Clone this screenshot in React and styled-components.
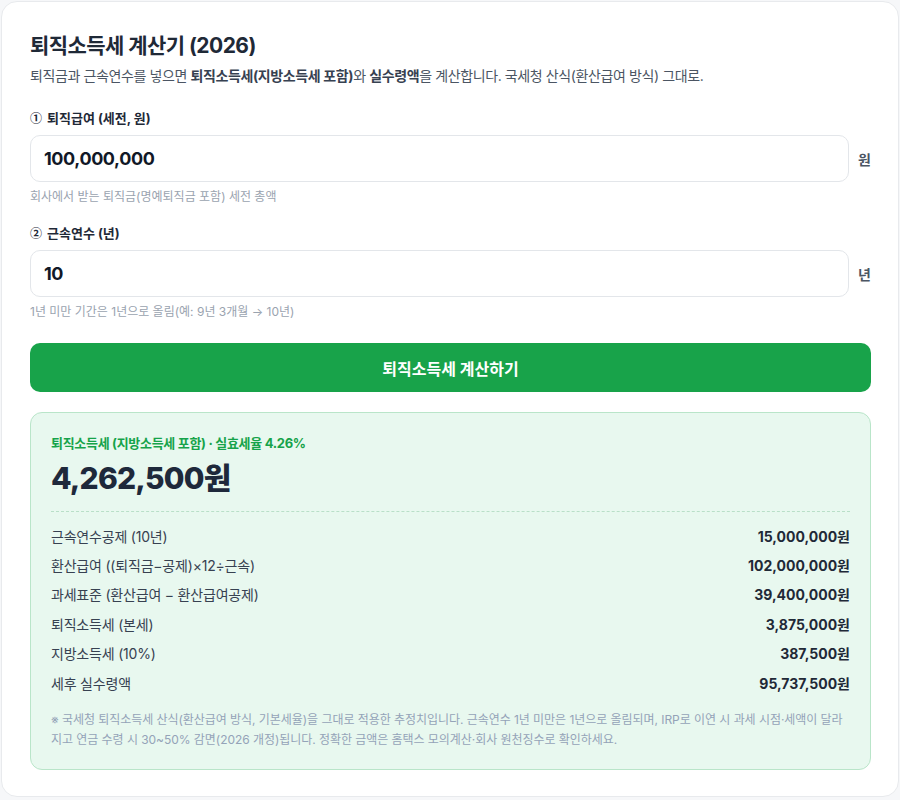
import React from "react";
import styled, { createGlobalStyle } from "styled-components";

const Global = createGlobalStyle`
  * { box-sizing: border-box; }
  html, body { margin: 0; padding: 0; background: #f6f7f9; }
  body { font-family: Inter, "Noto Sans CJK KR", sans-serif; color: #1f2937; }
`;

const Page = styled.div`
  padding: 1px 1px 3px 1px;
`;

const Card = styled.div`
  background: #fff;
  border: 1px solid #e8eaed;
  border-radius: 16px;
  padding: 29px 27px 27px 28px;
  height: 796px;
`;

const Title = styled.h1`
  margin: 0;
  font-size: 21px;
  font-weight: 700;
  color: #1f2937;
  line-height: 30px;
  letter-spacing: -0.55px;
`;

const Subtitle = styled.p`
  margin: 4px 0 0;
  font-size: 14px;
  line-height: 22px;
  color: #4b5563;
  letter-spacing: -0.39px;
  b { font-weight: 700; color: #374151; }
`;

const Field = styled.div`
  margin-top: ${(p) => p.$top}px;
`;

const Label = styled.div`
  display: flex;
  align-items: center;
  font-size: 13px;
  font-weight: 700;
  color: #1f2937;
  line-height: 18px;
  margin-bottom: 8px;
`;

const Num = styled.span`
  font-family: "Noto Sans CJK KR", sans-serif;
  font-size: 12px;
  font-weight: 700;
  margin-right: 5px;
  line-height: 18px;
`;

const InputRow = styled.div`
  display: flex;
  align-items: center;
  gap: 9px;
`;

const Input = styled.div`
  flex: 1;
  height: 47px;
  border: 1px solid #e3e6ea;
  border-radius: 10px;
  background: #fff;
  display: flex;
  align-items: center;
  padding: 0 13px;
  font-size: 18px;
  font-weight: 700;
  color: #111827;
  letter-spacing: -0.4px;
`;

const Unit = styled.span`
  font-size: 14px;
  font-weight: 700;
  color: #4b5563;
  width: 13px;
`;

const Hint = styled.div`
  margin-top: 7px;
  font-size: 12px;
  line-height: 16px;
  color: #9aa3af;
`;

const Button = styled.button`
  display: block;
  width: 100%;
  margin-top: 23px;
  height: 49px;
  border: none;
  border-radius: 10px;
  background: #18a34a;
  color: #fff;
  font-family: inherit;
  font-size: 16px;
  font-weight: 700;
`;

const Result = styled.div`
  margin-top: 20px;
  background: #e8f8ef;
  border: 1px solid #b9e5c9;
  border-radius: 12px;
  padding: 21px 20px 19px 20px;
`;

const ResultHead = styled.div`
  font-size: 13px;
  font-weight: 700;
  color: #16a34a;
  line-height: 18px;
  letter-spacing: -0.3px;
`;

const BigNumber = styled.div`
  margin-top: 6px;
  font-size: 30px;
  font-weight: 800;
  color: #1e293b;
  line-height: 40px;
  letter-spacing: -0.8px;
`;

const Divider = styled.div`
  margin: 13px 0 9px;
  border-top: 1px dashed #b9dfc8;
`;

const Row = styled.div`
  display: flex;
  justify-content: space-between;
  align-items: center;
  height: 29.4px;
  font-size: 14px;
`;

const RowLabel = styled.span`
  color: #374151;
  letter-spacing: -0.2px;
`;

const RowValue = styled.span`
  font-weight: 700;
  color: #1f2937;
`;

const Note = styled.p`
  margin: 13px 0 0;
  font-size: 12px;
  line-height: 20px;
  color: #94a3b8;
  letter-spacing: -0.05px;
`;

const rows = [
  ["근속연수공제 (10년)", "15,000,000원"],
  ["환산급여 ((퇴직금−공제)×12÷근속)", "102,000,000원"],
  ["과세표준 (환산급여 − 환산급여공제)", "39,400,000원"],
  ["퇴직소득세 (본세)", "3,875,000원"],
  ["지방소득세 (10%)", "387,500원"],
  ["세후 실수령액", "95,737,500원"],
];

export default function App() {
  return (
    <>
      <Global />
      <Page>
        <Card>
          <Title>퇴직소득세 계산기 (2026)</Title>
          <Subtitle>
            퇴직금과 근속연수를 넣으면 <b>퇴직소득세(지방소득세 포함)</b>와{" "}
            <b>실수령액</b>을 계산합니다. 국세청 산식(환산급여 방식) 그대로.
          </Subtitle>

          <Field $top={22}>
            <Label><Num>①</Num>퇴직급여 (세전, 원)</Label>
            <InputRow>
              <Input>100,000,000</Input>
              <Unit>원</Unit>
            </InputRow>
            <Hint>회사에서 받는 퇴직금(명예퇴직금 포함) 세전 총액</Hint>
          </Field>

          <Field $top={19}>
            <Label><Num>②</Num>근속연수 (년)</Label>
            <InputRow>
              <Input>10</Input>
              <Unit>년</Unit>
            </InputRow>
            <Hint>1년 미만 기간은 1년으로 올림(예: 9년 3개월 → 10년)</Hint>
          </Field>

          <Button>퇴직소득세 계산하기</Button>

          <Result>
            <ResultHead>퇴직소득세 (지방소득세 포함) · 실효세율 4.26%</ResultHead>
            <BigNumber>4,262,500원</BigNumber>
            <Divider />
            {rows.map(([l, v]) => (
              <Row key={l}>
                <RowLabel>{l}</RowLabel>
                <RowValue>{v}</RowValue>
              </Row>
            ))}
            <Note>
              ※ 국세청 퇴직소득세 산식(환산급여 방식, 기본세율)을 그대로 적용한 추정치입니다. 근속연수 1년 미만은 1년으로 올림되며, IRP로 이연 시 과세 시점·세액이 달라지고 연금 수령 시 30~50% 감면(2026 개정)됩니다. 정확한 금액은 홈택스 모의계산·회사 원천징수로 확인하세요.
            </Note>
          </Result>
        </Card>
      </Page>
    </>
  );
}
